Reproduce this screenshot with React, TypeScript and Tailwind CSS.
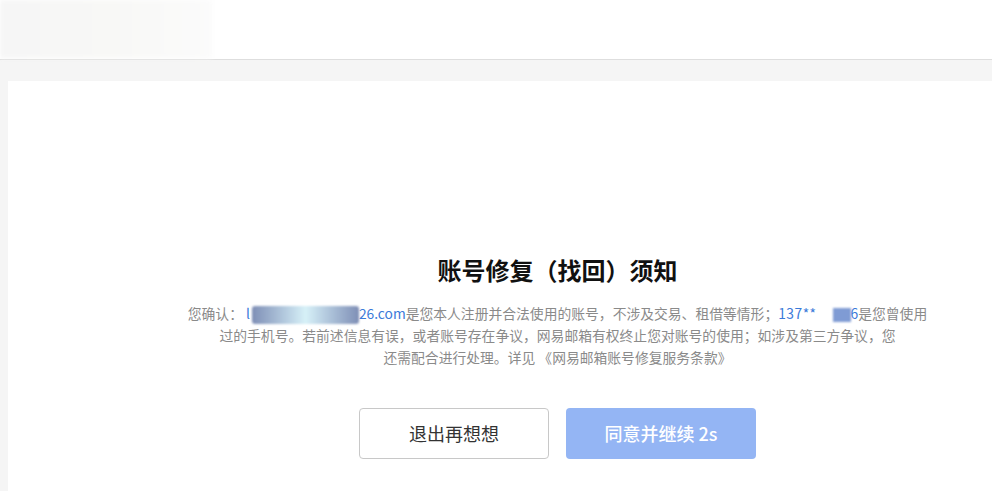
export default function App() {
  const font = { fontFamily: '"PingFang SC", "Noto Sans CJK SC", "Noto Sans", sans-serif' }
  return (
    <div className="h-[491px] overflow-hidden bg-[#f5f5f5]" style={font}>
      {/* header */}
      <div className="h-[60px] bg-white border-b border-[#dedede]">
        <div className="h-[58px] w-[212px] bg-gradient-to-r from-[#f6f6f6] via-[#f8f8f6] to-[#fbfbfb] blur-[2px]" />
      </div>

      <div className="pt-[21px] pl-2">
        <div className="h-[420px] bg-white flex flex-col items-center pl-[115px] pt-[173px]">
          <h1 className="text-[24px] leading-[32px] font-bold text-[#111]">账号修复（找回）须知</h1>

          <p className="mt-4 w-[800px] text-center text-[13.8px] leading-[22px] text-[#8a8a8a]">
            您确认：
            <span className="text-[#3b7ad9] ml-[3px]">l</span>
            <span className="inline-block align-middle w-[107px] h-[18px] ml-[2px] rounded-[3px] bg-gradient-to-r from-[#7f8fb6] via-[#d7f1f8] to-[#7f8fb6] blur-[1px]" />
            <span className="text-[#3b7ad9]">26.com</span>
            是您本人注册并合法使用的账号，不涉及交易、租借等情形；
            <span className="text-[#3b7ad9] tracking-[0.5px]">137**</span>
            <span className="inline-block align-middle w-[18px] h-[14px] bg-[#7f9bd4] blur-[1px] ml-[16px]" />
            <span className="text-[#3b7ad9]">6</span>
            是您曾使用
            <br />
            过的手机号。若前述信息有误，或者账号存在争议，网易邮箱有权终止您对账号的使用；如涉及第三方争议，您
            <br />
            还需配合进行处理。详见 《网易邮箱账号修复服务条款》
          </p>

          <div className="mt-10 flex gap-[17px]">
            <button className="w-[190px] h-[51px] rounded border border-[#c8c8c8] bg-white text-[18px] text-[#333]">
              退出再想想
            </button>
            <button className="w-[190px] h-[51px] rounded bg-[#94b5f4] text-[18px] font-medium text-white">
              同意并继续 2s
            </button>
          </div>
        </div>
      </div>
    </div>
  )
}
